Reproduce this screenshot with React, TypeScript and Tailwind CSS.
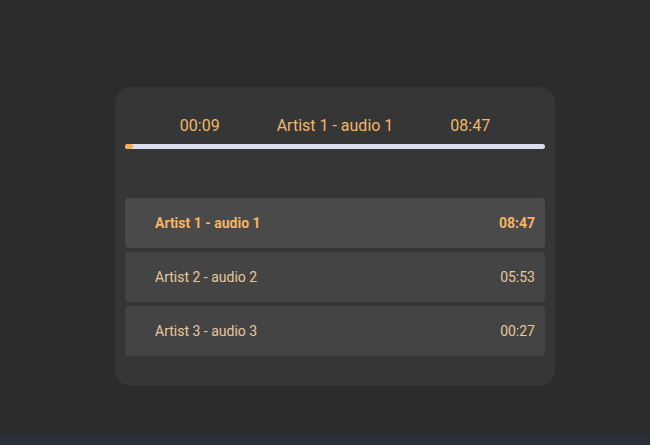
import React from 'react';

const tracks = [
  { title: 'Artist 1 - audio 1', duration: '08:47' },
  { title: 'Artist 2 - audio 2', duration: '05:53' },
  { title: 'Artist 3 - audio 3', duration: '00:27' },
];

export default function App() {
  const current = 0;
  const progress = 2;

  return (
    <div className="font-['Roboto',sans-serif]">
      <div className="h-[435px] bg-[#2c2c2c] flex justify-center pt-[87px] pl-[20px]">
        <div className="w-[440px] h-[299px] bg-[#363636] rounded-[16px] px-[10px] pt-[29px]">
          <div className="flex justify-center gap-[57px] text-[16px] leading-[20px] text-[#f0b66b]">
            <span>00:09</span>
            <span>{tracks[current].title}</span>
            <span>{tracks[current].duration}</span>
          </div>
          <div className="mt-[8px] h-[5px] rounded-full bg-[#dddcf0] overflow-hidden">
            <div className="h-full rounded-full bg-[#f5b04e]" style={{ width: `${progress}%` }} />
          </div>
          <div className="mt-[49px] flex flex-col gap-[4px]">
            {tracks.map((t, i) => (
              <div
                key={t.title}
                className={
                  i === current
                    ? 'h-[50px] rounded-[4px] bg-[#4a4a4a] flex items-center justify-between pl-[30px] pr-[10px] text-[14px] font-bold text-[#f5b460]'
                    : 'h-[50px] rounded-[4px] bg-[#444444] flex items-center justify-between pl-[30px] pr-[10px] text-[14px] text-[#e8c89c]'
                }
              >
                <span>{t.title}</span>
                <span>{t.duration}</span>
              </div>
            ))}
          </div>
        </div>
      </div>
      <div className="h-[10px] bg-[#2a2f3b]" />
    </div>
  );
}
